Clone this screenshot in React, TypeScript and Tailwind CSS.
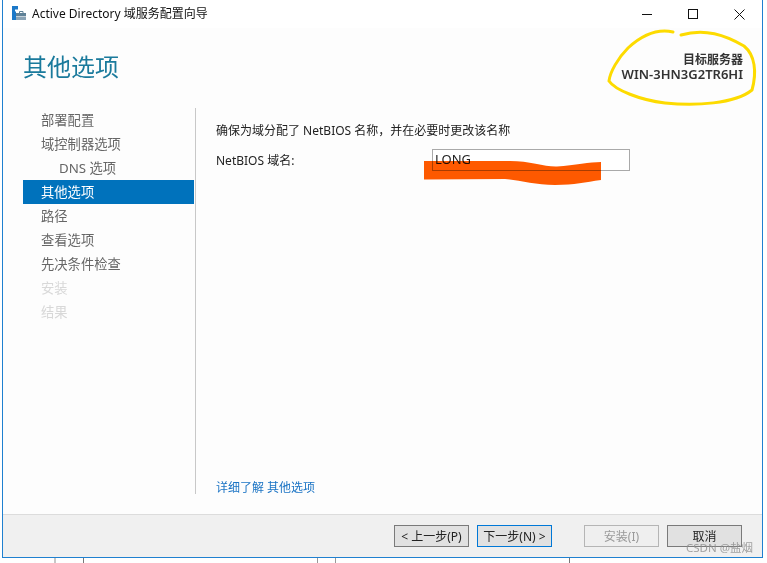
const font = { fontFamily: '"Noto Sans", "Noto Sans CJK SC", sans-serif' };

const steps = [
  { label: "部署配置" },
  { label: "域控制器选项" },
  { label: "DNS 选项", sub: true },
  { label: "其他选项", active: true },
  { label: "路径" },
  { label: "查看选项" },
  { label: "先决条件检查" },
  { label: "安装", disabled: true },
  { label: "结果", disabled: true },
];

function AppIcon() {
  return (
    <svg width="16" height="16" viewBox="0 0 16 16" className="shrink-0">
      <path d="M0 0h6v3.500h-3v2h1v8.500h-4z" fill="#1b78c8" />
      <path d="M7.500 7v-1.500h3.500v1.500" fill="none" stroke="#5f8197" strokeWidth="1" />
      <path d="M4 7h10v3h-10z" fill="#5f8197" />
      <path d="M4 10.500h10v3.500h-10z" fill="#8aa3b5" />
    </svg>
  );
}

function WindowControls() {
  return (
    <div className="flex items-center">
      <div className="flex w-[46px] justify-center">
        <div className="h-px w-[10px] bg-[#111]" />
      </div>
      <div className="flex w-[46px] justify-center">
        <div className="h-[10px] w-[10px] border border-[#111]" />
      </div>
      <div className="flex w-[46px] justify-center">
        <svg width="11" height="11" viewBox="0 0 11 11">
          <path d="M0.500 0.500l10 10M10.500 0.500l-10 10" stroke="#111" strokeWidth="1" fill="none" />
        </svg>
      </div>
    </div>
  );
}

function FooterButton({ label, variant }: { label: string; variant?: "focus" | "disabled" }) {
  const cls =
    variant === "focus"
      ? "border-[#0078d7] bg-[#e1e1e1] text-[#222]"
      : variant === "disabled"
        ? "border-[#b5b5b5] bg-[#efefef] text-[#9a9a9a]"
        : "border-[#7a7a7a] bg-[#e1e1e1] text-[#222]";
  return (
    <div className={`flex h-[22px] w-[75px] items-center justify-center border pt-[2px] text-[12px] ${cls}`}>
      {label}
    </div>
  );
}

export default function App() {
  return (
    <div className="relative h-[563px] w-[767px] overflow-hidden bg-white" style={font}>
      <div className="ml-[2px] flex h-[558px] w-[761px] flex-col border-x border-b border-[#1f80d0] bg-[#fdfdfd]">
        <div className="flex h-[28px] shrink-0 items-center justify-between bg-white pl-[9px]">
          <div className="flex items-center gap-[4px] text-[12px] text-[#111]">
            <AppIcon />
            <span>Active Directory 域服务配置向导</span>
          </div>
          <WindowControls />
        </div>

        <div className="flex h-[80px] shrink-0 items-start justify-between pl-[20px] pr-[19px]">
          <div className="mt-[23px] text-[24px] leading-[32px] text-[#1a7a9c]">其他选项</div>
          <div className="mt-[25px] text-right text-[12px] font-semibold leading-[14px] text-[#333]">
            <div>目标服务器</div>
            <div className="text-[13px]">WIN-3HN3G2TR6HI</div>
          </div>
        </div>

        <div className="flex h-[386px] shrink-0 pl-[20px]">
          <nav className="w-[172px] pr-[1px] text-[13.3px]">
            {steps.map((s) => (
              <div
                key={s.label}
                className={`flex h-[24px] items-center pt-[2px] ${s.sub ? "pl-[36px]" : "pl-[18px]"} ${
                  s.active
                    ? "bg-[#0072bc] text-white"
                    : s.disabled
                      ? "text-[#d8d8d8]"
                      : "text-[#666]"
                }`}
              >
                {s.label}
              </div>
            ))}
          </nav>
          <div className="flex grow flex-col border-l border-[#c8c8c8] pl-[20px]">
            <div className="mt-[15px] text-[12px] leading-[16px] text-[#222]">
              确保为域分配了 NetBIOS 名称，并在必要时更改该名称
            </div>
            <div className="mt-[10px] flex items-center text-[12px] text-[#222]">
              <span className="w-[216px] pt-[1px]">NetBIOS 域名:</span>
              <div className="flex h-[22px] w-[198px] items-center border border-[#a9a9a9] bg-white pl-[2px] text-[13px]">
                LONG
              </div>
            </div>
            <div className="-mb-[2px] mt-auto text-[12px] leading-[16px] text-[#1a73c4]">详细了解 其他选项</div>
          </div>
        </div>

        <div className="mt-[20px] flex grow items-start border-t border-[#dcdcdc] bg-[#f0f0f0] pl-[391px] pt-[10px]">
          <FooterButton label="< 上一步(P)" />
          <div className="ml-[8px]">
            <FooterButton label="下一步(N) >" variant="focus" />
          </div>
          <div className="ml-[32px]">
            <FooterButton label="安装(I)" variant="disabled" />
          </div>
          <div className="ml-[8px]">
            <FooterButton label="取消" />
          </div>
        </div>
      </div>

      <div className="flex h-[5px]">
        <div className="ml-[54px] h-full w-[2px] bg-[#c8c8c8]" />
        <div className="ml-[27px] h-full w-px bg-[#777]" />
        <div className="ml-[233px] h-full w-px bg-[#999]" />
        <div className="ml-[17px] h-full w-px bg-[#999]" />
        <div className="ml-[233px] h-full w-px bg-[#777]" />
      </div>

      <svg width="767" height="563" viewBox="0 0 767 563" className="pointer-events-none absolute left-0 top-0 mix-blend-multiply">
        <path
          d="M673 32C655 28 640 37 628 48C618 58 610 72 609 81C615 90 640 100 665 103C695 106 735 104 752 90C757 72 755 55 744 46C725 35 705 28 681 35"
          fill="none"
          stroke="#ffdd00"
          strokeWidth="3"
          strokeLinecap="round"
        />
        <path
          d="M424 161L510 161C530 161 545 167 557 166.500C575 165 590 162 601 162L601 180C585 182 575 185 555 185C535 185 520 180 505 179L424 179.500Z"
          fill="#ff5a00"
        />
      </svg>
      <div className="absolute left-[686px] top-[541px] text-[11.500px] leading-[14px] text-[#8c8c8c]/80">CSDN @盐烟</div>
    </div>
  );
}
